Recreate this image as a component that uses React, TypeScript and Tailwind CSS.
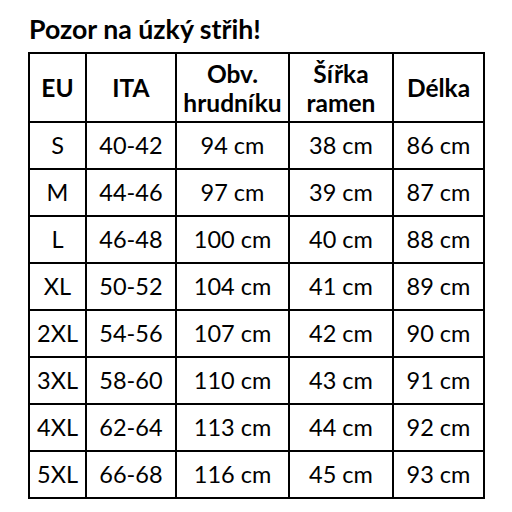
import React from "react";

const rows = [
  ["S", "40-42", "94 cm", "38 cm", "86 cm"],
  ["M", "44-46", "97 cm", "39 cm", "87 cm"],
  ["L", "46-48", "100 cm", "40 cm", "88 cm"],
  ["XL", "50-52", "104 cm", "41 cm", "89 cm"],
  ["2XL", "54-56", "107 cm", "42 cm", "90 cm"],
  ["3XL", "58-60", "110 cm", "43 cm", "91 cm"],
  ["4XL", "62-64", "113 cm", "44 cm", "92 cm"],
  ["5XL", "66-68", "116 cm", "45 cm", "93 cm"],
];

export default function App() {
  return (
    <div className="w-[512px] h-[512px] bg-white text-black font-['Lato',sans-serif] overflow-hidden">
      <div className="pl-[29px] pt-[14px] h-[52px] text-[26.7px] font-bold leading-[30px]">
        Pozor na úzký střih!
      </div>
      <table className="ml-[28px] border-collapse table-fixed w-[455px] border-2 border-black text-[23.5px] text-center">
        <colgroup>
          <col className="w-[57px]" />
          <col className="w-[90px]" />
          <col className="w-[113px]" />
          <col className="w-[104px]" />
          <col className="w-[91px]" />
        </colgroup>
        <thead>
          <tr className="h-[69px] font-bold leading-[29px] text-[24.5px]">
            <th className="border-2 border-black p-0">EU</th>
            <th className="border-2 border-black p-0">ITA</th>
            <th className="border-2 border-black p-0">
              Obv.
              <br />
              hrudníku
            </th>
            <th className="border-2 border-black p-0">
              Šířka
              <br />
              ramen
            </th>
            <th className="border-2 border-black p-0">Délka</th>
          </tr>
        </thead>
        <tbody>
          {rows.map((r) => (
            <tr key={r[0]} className="h-[47px]">
              {r.map((c, i) => (
                <td key={i} className="border-2 border-black p-0 whitespace-nowrap">
                  {c}
                </td>
              ))}
            </tr>
          ))}
        </tbody>
      </table>
    </div>
  );
}
